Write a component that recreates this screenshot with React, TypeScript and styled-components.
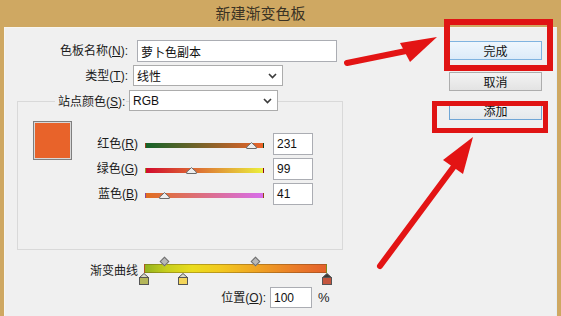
import React from "react";
import styled, { createGlobalStyle } from "styled-components";

const Global = createGlobalStyle`
  html, body { margin: 0; padding: 0; background: #cfa862; }
  body { font-family: "Liberation Sans", "Noto Sans CJK SC", sans-serif; }
`;

const Window = styled.div`
  position: relative;
  width: 561px;
  height: 316px;
  overflow: hidden;
  box-sizing: border-box;
  padding: 0 4px;
  background: #cfa862;
  display: flex;
  flex-direction: column;
  font-family: "Liberation Sans", "Noto Sans CJK SC", sans-serif;
  font-size: 12px;
  color: #1b1b1b;
`;

const TitleBar = styled.div`
  flex: none;
  height: 27px;
  box-sizing: border-box;
  padding: 0 40px 2px 0;
  display: flex;
  align-items: center;
  justify-content: center;
  font-family: "Noto Sans CJK SC", sans-serif;
  font-size: 15px;
  color: #3a3224;
`;

const Client = styled.div`
  flex: 1;
  display: flex;
  background: #f0f0f0;
  border-top: 1px solid #f8f6f0;
  border-left: 1px solid #f8f6f0;
  border-right: 1px solid #e4edf4;
`;

const LeftCol = styled.div`
  width: 440px;
  flex: none;
  padding-top: 12px;
  display: flex;
  flex-direction: column;
`;

const RightCol = styled.div`
  flex: 1;
  padding: 13px 0 0 4px;
  display: flex;
  flex-direction: column;
`;

const Row = styled.div<{ $mt?: number }>`
  display: flex;
  align-items: center;
  margin-top: ${(p) => p.$mt ?? 0}px;
`;

const FieldLabel = styled.div<{ $w: number }>`
  width: ${(p) => p.$w}px;
  flex: none;
  text-align: right;
  white-space: nowrap;
  line-height: 16px;
`;

const TextBox = styled.div<{ $w: number; $h: number; $ml: number }>`
  box-sizing: border-box;
  width: ${(p) => p.$w}px;
  height: ${(p) => p.$h}px;
  margin-left: ${(p) => p.$ml}px;
  flex: none;
  border: 1px solid #abadb3;
  background: #ffffff;
  padding-left: 3px;
  display: flex;
  align-items: center;
  white-space: nowrap;
  font-size: 12px;
  color: #111;
`;

const Combo = styled(TextBox)`
  justify-content: space-between;
  padding-right: 5px;
  border-color: #acacac;
`;

const Chevron = () => (
  <svg width="9" height="6" viewBox="0 0 9 6">
    <polyline points="1,1 4.5,4.6 8,1" fill="none" stroke="#3c3c3c" strokeWidth="1.6" />
  </svg>
);

const GroupBox = styled.div`
  box-sizing: border-box;
  width: 326px;
  height: 149px;
  margin: 15px 0 0 12px;
  border: 1px solid #d9d9d9;
  display: flex;
  flex-direction: column;
`;

const GroupHeader = styled.div`
  display: flex;
  align-items: center;
  margin: -12px 0 0 37px;
`;

const GroupLegend = styled.div`
  box-sizing: border-box;
  width: 71px;
  padding: 0 1px 0 3px;
  background: #f0f0f0;
  text-align: right;
  white-space: nowrap;
`;

const SwatchArea = styled.div`
  display: flex;
  align-items: flex-start;
  margin-top: 10px;
  padding-left: 15px;
`;

const Swatch = styled.div<{ $color: string }>`
  box-sizing: border-box;
  width: 39px;
  height: 39px;
  flex: none;
  border: 1px solid #7f7f7f;
  box-shadow: inset 0 0 0 1px #d8d8d8;
  background: ${(p) => p.$color};
`;

const SliderCol = styled.div`
  margin-top: 12px;
  display: flex;
  flex-direction: column;
  gap: 3px;
`;

const SliderRow = styled.div`
  height: 22px;
  display: flex;
  align-items: center;
`;

const Track = styled.div`
  position: relative;
  box-sizing: border-box;
  width: 119px;
  height: 5px;
  margin: 2px 0 0 7px;
  flex: none;
  border-left: 1px solid rgba(0, 0, 0, 0.35);
  border-right: 1px solid rgba(0, 0, 0, 0.35);
`;

const ThumbMark = styled.svg`
  position: absolute;
  top: -1px;
  width: 11px;
  height: 7px;
  margin-left: -5.5px;
`;

const GradientRow = styled.div`
  display: flex;
  align-items: center;
  margin-top: 6px;
`;

const Editor = styled.div`
  width: 183px;
  margin-left: 6px;
  display: flex;
  flex-direction: column;
`;

const Lane = styled.div<{ $h: number }>`
  position: relative;
  height: ${(p) => p.$h}px;
`;

const GradientBar = styled.div`
  box-sizing: border-box;
  height: 9px;
  border: 1px solid rgba(90, 60, 20, 0.35);
  background: linear-gradient(
    to right,
    #93b31f 0%,
    #c7cf1e 12%,
    #eadc1d 26%,
    #f2c81f 42%,
    #efa323 62%,
    #ea7d28 82%,
    #e4612b 100%
  );
`;

const Diamond = styled.div`
  position: absolute;
  top: 2px;
  width: 5px;
  height: 5px;
  margin-left: -3px;
  transform: rotate(45deg);
  background: #b9b9b9;
  border: 1px solid #6f6f6f;
`;

const StopMark = styled.svg`
  position: absolute;
  top: 0;
  width: 10px;
  height: 12px;
  margin-left: -5px;
`;

const Percent = styled.span`
  margin-left: 6px;
  font-size: 13px;
`;

const Button = styled.div<{ $kind: "default" | "normal" | "focus"; $mt: number }>`
  box-sizing: border-box;
  width: 93px;
  height: 19px;
  margin-top: ${(p) => p.$mt}px;
  display: flex;
  align-items: center;
  justify-content: center;
  font-family: "Noto Sans CJK SC", sans-serif;
  font-size: 12px;
  color: #111;
  border: 1px solid
    ${(p) => (p.$kind === "normal" ? "#adadad" : p.$kind === "default" ? "#7fb3e0" : "#6fa6d6")};
  background: ${(p) =>
    p.$kind === "normal"
      ? "linear-gradient(#f3f3f3, #e3e3e3)"
      : p.$kind === "default"
      ? "linear-gradient(#eef6fd, #dcebf9)"
      : "linear-gradient(#f2f4f6, #e5e9ec)"};
`;

const RedBox = styled.div<{ $x: number; $y: number; $w: number; $h: number; $t: number }>`
  position: absolute;
  left: ${(p) => p.$x}px;
  top: ${(p) => p.$y}px;
  width: ${(p) => p.$w}px;
  height: ${(p) => p.$h}px;
  box-sizing: border-box;
  border: ${(p) => p.$t}px solid #e01414;
  pointer-events: none;
`;

const ArrowLayer = styled.svg`
  position: absolute;
  left: 0;
  top: 0;
  width: 561px;
  height: 316px;
  pointer-events: none;
`;

type Channel = { name: string; key: string; value: number; from: string; to: string };

const channels: Channel[] = [
  { name: "红色", key: "R", value: 231, from: "rgb(20,99,41)", to: "rgb(235,99,41)" },
  { name: "绿色", key: "G", value: 99, from: "rgb(210,10,45)", to: "rgb(235,240,60)" },
  { name: "蓝色", key: "B", value: 41, from: "rgb(225,110,30)", to: "rgb(215,110,235)" },
];

const stops = [
  { pos: 0, color: "#b4b65a", selected: false },
  { pos: 21.3, color: "#f3d55a", selected: false },
  { pos: 100, color: "#c4553d", selected: true },
];

const midpoints = [11, 60.5];

const Thumb = ({ pct }: { pct: number }) => (
  <ThumbMark viewBox="0 0 11 7" style={{ left: `${pct}%` }}>
    <polygon points="5.5,0.6 10.3,5 10.3,6.5 0.7,6.5 0.7,5" fill="#ededed" stroke="#6a6a6a" strokeWidth="1" />
  </ThumbMark>
);

const Stop = ({ pos, color, selected }: { pos: number; color: string; selected: boolean }) => (
  <StopMark viewBox="0 0 10 12" style={{ left: `${pos}%` }}>
    <polygon points="5,0.5 9.5,4.5 0.5,4.5" fill={selected ? "#3a3a3a" : "#d9d9c8"} stroke="#555" strokeWidth="1" />
    <rect x="0.5" y="4.5" width="9" height="7" fill={color} stroke="#555" strokeWidth="1" />
  </StopMark>
);

export default function App() {
  return (
    <>
      <Global />
      <Window>
        <TitleBar>新建渐变色板</TitleBar>
        <Client>
          <LeftCol>
            <Row>
              <FieldLabel $w={123}>
                色板名称(<u>N</u>):
              </FieldLabel>
              <TextBox $w={200} $h={22} $ml={9}>
                萝卜色副本
              </TextBox>
            </Row>
            <Row $mt={3}>
              <FieldLabel $w={123}>
                类型(<u>T</u>):
              </FieldLabel>
              <Combo $w={150} $h={21} $ml={5}>
                <span>线性</span>
                <Chevron />
              </Combo>
            </Row>

            <GroupBox>
              <GroupHeader>
                <GroupLegend>
                  站点颜色(<u>S</u>):
                </GroupLegend>
                <Combo $w={149} $h={21} $ml={3}>
                  <span>RGB</span>
                  <Chevron />
                </Combo>
              </GroupHeader>
              <SwatchArea>
                <Swatch $color="#e8632a" />
                <SliderCol>
                  {channels.map((c) => (
                    <SliderRow key={c.key}>
                      <FieldLabel $w={66}>
                        {c.name}(<u>{c.key}</u>)
                      </FieldLabel>
                      <Track style={{ background: `linear-gradient(to right, ${c.from}, ${c.to})` }}>
                        <Thumb pct={(c.value / 255) * 100} />
                      </Track>
                      <TextBox $w={40} $h={22} $ml={9}>
                        {c.value}
                      </TextBox>
                    </SliderRow>
                  ))}
                </SliderCol>
              </SwatchArea>
            </GroupBox>

            <GradientRow>
              <FieldLabel $w={133}>渐变曲线</FieldLabel>
              <Editor>
                <Lane $h={8}>
                  {midpoints.map((m) => (
                    <Diamond key={m} style={{ left: `${m}%` }} />
                  ))}
                </Lane>
                <GradientBar />
                <Lane $h={12}>
                  {stops.map((s) => (
                    <Stop key={s.pos} pos={s.pos} color={s.color} selected={s.selected} />
                  ))}
                </Lane>
              </Editor>
            </GradientRow>

            <Row $mt={2}>
              <FieldLabel $w={261}>
                位置(<u>O</u>):
              </FieldLabel>
              <TextBox $w={42} $h={21} $ml={4}>
                100
              </TextBox>
              <Percent>%</Percent>
            </Row>
          </LeftCol>

          <RightCol>
            <Button $kind="default" $mt={0}>
              完成
            </Button>
            <Button $kind="normal" $mt={12}>
              取消
            </Button>
            <Button $kind="focus" $mt={10}>
              添加
            </Button>
          </RightCol>
        </Client>

        <RedBox $x={444} $y={19} $w={109} $h={52} $t={6} />
        <RedBox $x={432} $y={101} $w={116} $h={32} $t={5} />

        <ArrowLayer viewBox="0 0 561 316">
          <line x1="347" y1="63" x2="406" y2="51" stroke="#e31414" strokeWidth="6" strokeLinecap="round" />
          <polygon points="437,37 400,43 410,62" fill="#e31414" />
          <line x1="380" y1="266" x2="455" y2="165" stroke="#e31414" strokeWidth="6" strokeLinecap="round" />
          <polygon points="473,137 443,160 463,174" fill="#e31414" />
        </ArrowLayer>
      </Window>
    </>
  );
}
